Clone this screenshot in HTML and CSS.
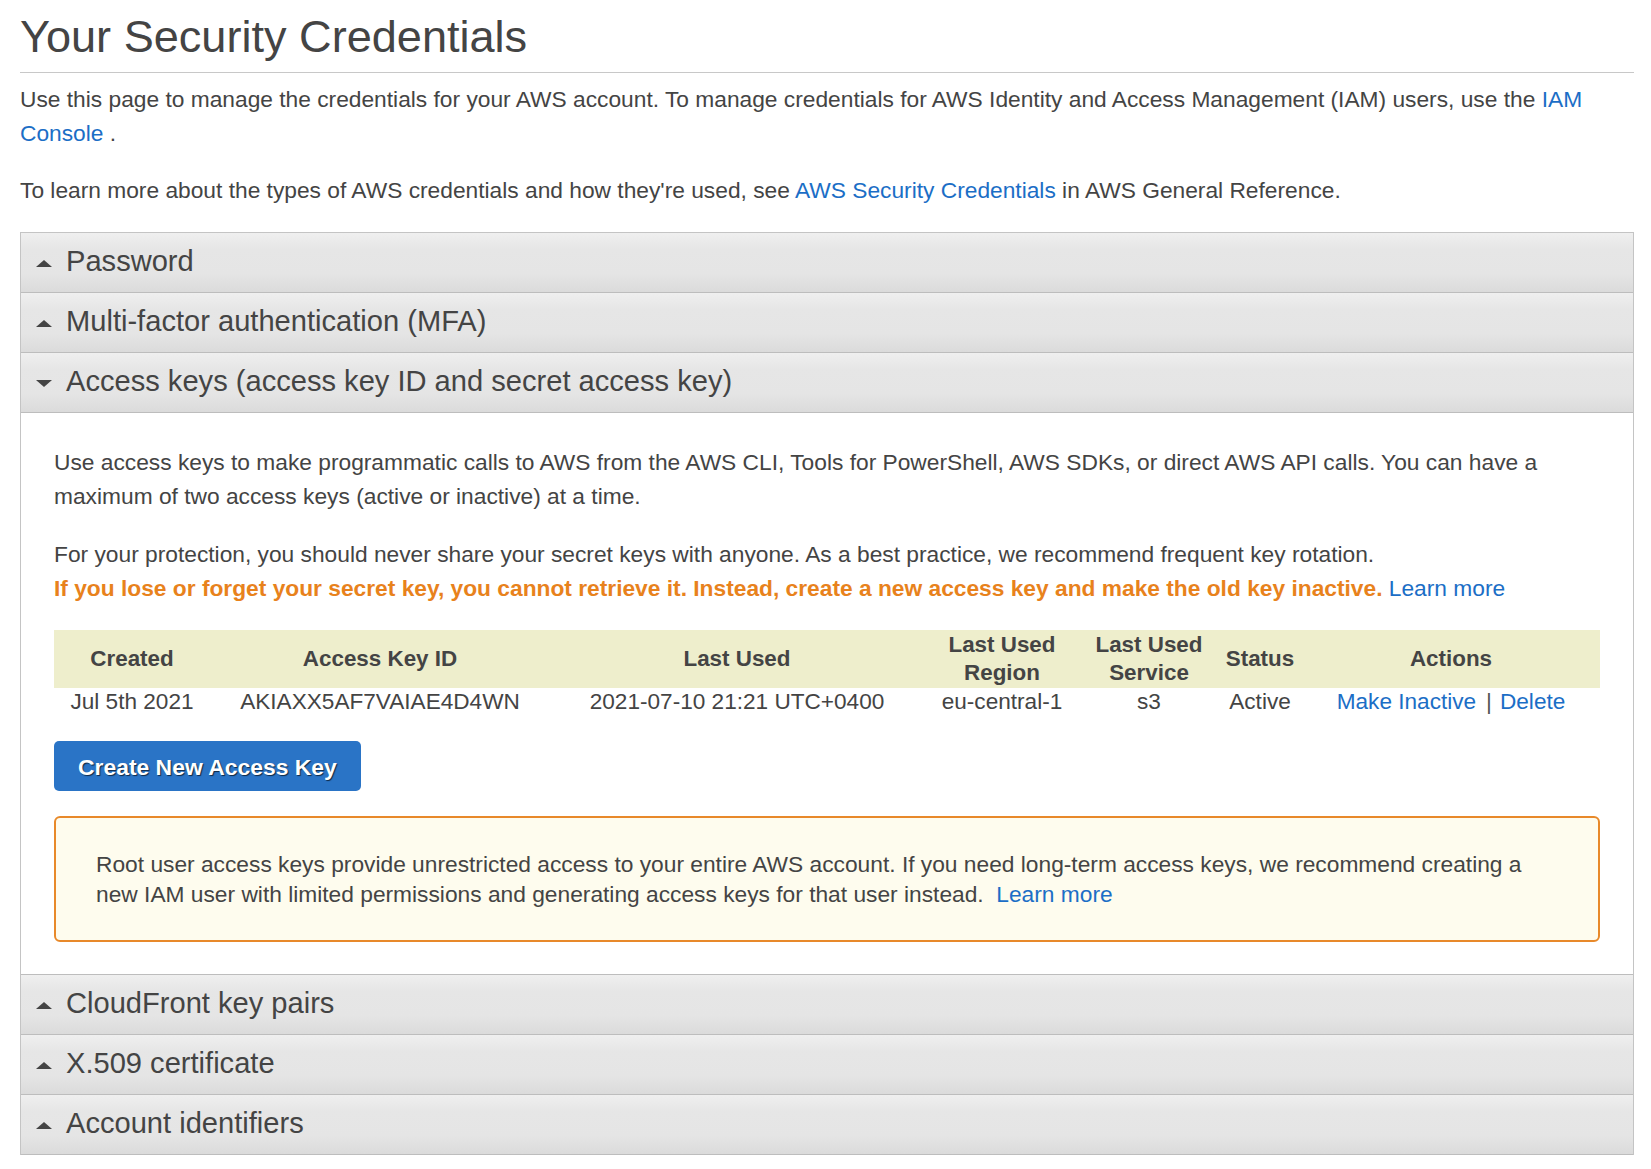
FILE: index.html
```html
<!DOCTYPE html>
<html lang="en">
<head>
<meta charset="utf-8">
<title>Your Security Credentials</title>
<link rel="stylesheet" href="styles.css">
</head>
<body>
<div class="page">
  <h1 class="title">Your Security Credentials</h1>
  <p class="intro">Use this page to manage the credentials for your AWS account. To manage credentials for AWS Identity and Access Management (IAM) users, use the <a class="link" href="#">IAM Console</a> .</p>
  <p class="intro intro-last">To learn more about the types of AWS credentials and how they're used, see <a class="link" href="#">AWS Security Credentials</a> in AWS General Reference.</p>

  <div class="accordion">
    <div class="acc-header"><span class="tri tri-up"></span><span class="acc-title">Password</span></div>
    <div class="acc-header"><span class="tri tri-up"></span><span class="acc-title">Multi-factor authentication (MFA)</span></div>
    <div class="acc-header"><span class="tri tri-down"></span><span class="acc-title">Access keys (access key ID and secret access key)</span></div>
    <div class="acc-body">
      <p class="body-p">Use access keys to make programmatic calls to AWS from the AWS CLI, Tools for PowerShell, AWS SDKs, or direct AWS API calls. You can have a maximum of two access keys (active or inactive) at a time.</p>
      <p class="body-p body-p-last">For your protection, you should never share your secret keys with anyone. As a best practice, we recommend frequent key rotation.<br><span class="warn-text">If you lose or forget your secret key, you cannot retrieve it. Instead, create a new access key and make the old key inactive.</span> <a class="link" href="#">Learn more</a></p>

      <table class="keys">
        <colgroup>
          <col class="c-created">
          <col class="c-id">
          <col class="c-used">
          <col class="c-region">
          <col class="c-service">
          <col class="c-status">
          <col class="c-actions">
        </colgroup>
        <thead>
          <tr>
            <th>Created</th>
            <th>Access Key ID</th>
            <th>Last Used</th>
            <th>Last Used Region</th>
            <th>Last Used Service</th>
            <th>Status</th>
            <th>Actions</th>
          </tr>
        </thead>
        <tbody>
          <tr>
            <td>Jul 5th 2021</td>
            <td>AKIAXX5AF7VAIAE4D4WN</td>
            <td>2021-07-10 21:21 UTC+0400</td>
            <td>eu-central-1</td>
            <td>s3</td>
            <td>Active</td>
            <td><a class="link" href="#">Make Inactive</a><span class="sep">|</span><a class="link" href="#">Delete</a></td>
          </tr>
        </tbody>
      </table>

      <button class="btn-primary" type="button">Create New Access Key</button>

      <div class="notice">
        <p class="notice-text">Root user access keys provide unrestricted access to your entire AWS account. If you need long-term access keys, we recommend creating a new IAM user with limited permissions and generating access keys for that user instead. &nbsp;<a class="link" href="#">Learn more</a></p>
      </div>
    </div>
    <div class="acc-header"><span class="tri tri-up"></span><span class="acc-title">CloudFront key pairs</span></div>
    <div class="acc-header"><span class="tri tri-up"></span><span class="acc-title">X.509 certificate</span></div>
    <div class="acc-header"><span class="tri tri-up"></span><span class="acc-title">Account identifiers</span></div>
  </div>
</div>
</body>
</html>
```

FILE: styles.css
```css
html, body {
  margin: 0;
  padding: 0;
  background: #ffffff;
}

body {
  font-family: "Liberation Sans", Arial, Helvetica, sans-serif;
  font-size: 22.75px;
  line-height: 34px;
  color: #444444;
}

.page {
  padding: 0 17px 0 20px;
}

.title {
  margin: 0;
  padding: 12px 0 10px;
  font-size: 45.1px;
  line-height: 50px;
  font-weight: normal;
  color: #444444;
  border-bottom: 1px solid #c8c8c8;
}

.intro {
  margin: 9px 0 23px;
}

.intro-last {
  margin-bottom: 25px;
}

.link {
  color: #1b6ec6;
  text-decoration: none;
}

/* Accordion */
.accordion {
  border: 1px solid #c4c4c4;
  border-bottom: none;
}

.acc-header {
  box-sizing: border-box;
  height: 60px;
  display: flex;
  align-items: flex-start;
  padding-left: 15px;
  border-bottom: 1px solid #bdbdbd;
  background: linear-gradient(to bottom, #efefef 0%, #e6e6e6 28%, #e5e5e5 68%, #dbdbdb 100%);
}

.acc-title {
  margin-left: 14px;
  font-size: 29.1px;
  line-height: 56px;
  color: #444444;
}

.tri {
  width: 0;
  height: 0;
  margin-top: 27px;
  border-left: 8px solid transparent;
  border-right: 8px solid transparent;
}

.tri-up {
  border-bottom: 7px solid #444444;
}

.tri-down {
  border-top: 7px solid #444444;
}

.acc-body {
  padding: 32px 33px 32px;
  border-bottom: 1px solid #bdbdbd;
  background: #ffffff;
}

.body-p {
  margin: 0 0 24px;
}

.body-p-last {
  margin-bottom: 25px;
}

.warn-text {
  color: #e8821c;
  font-weight: bold;
}

/* Table */
.keys {
  width: 100%;
  border-collapse: collapse;
  table-layout: fixed;
}

.c-created { width: 156px; }
.c-id { width: 340px; }
.c-used { width: 374px; }
.c-region { width: 156px; }
.c-service { width: 138px; }
.c-status { width: 84px; }
.c-actions { width: 298px; }

.keys th {
  background: #eeeecc;
  font-size: 22.4px;
  font-weight: bold;
  line-height: 28px;
  padding: 1px 0;
  text-align: center;
  vertical-align: middle;
  color: #444444;
}

.keys td {
  padding: 0;
  font-size: 22.6px;
  line-height: 28px;
  text-align: center;
  white-space: nowrap;
}

.sep {
  margin: 0 8px 0 10px;
  color: #555555;
}

/* Button */
.btn-primary {
  display: block;
  margin: 25px 0 0;
  box-sizing: border-box;
  height: 50px;
  padding: 2px 24px 0;
  font-family: "Liberation Sans", Arial, Helvetica, sans-serif;
  font-size: 22.9px;
  font-weight: bold;
  line-height: 48px;
  color: #ffffff;
  text-shadow: 1px 1px 1px rgba(0, 0, 0, 0.65);
  background: #2a74c6;
  border: none;
  border-radius: 5px;
}

/* Notice */
.notice {
  margin-top: 25px;
  padding: 31px 48px 31px 40px;
  border: 2px solid #e8892a;
  border-radius: 6px;
  background: #fefcee;
}

.notice-text {
  margin: 0;
  line-height: 30px;
}
```
